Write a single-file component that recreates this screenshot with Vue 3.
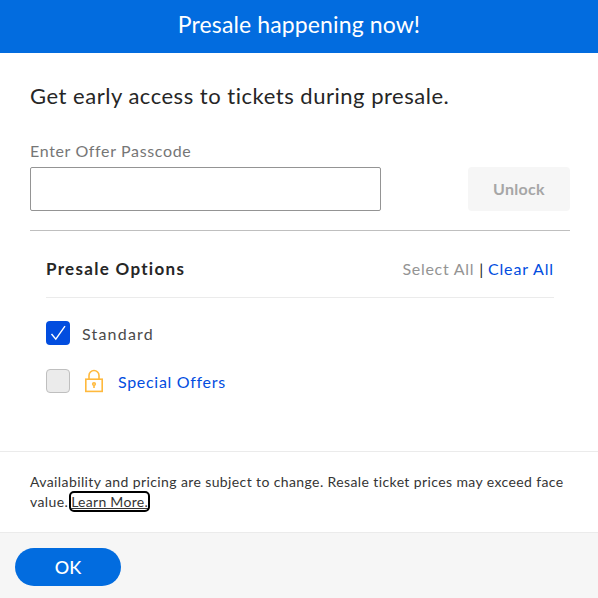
<script setup>
const offers = 'Special Offers'
</script>

<template>
  <div class="modal">
    <header class="banner">Presale happening now!</header>
    <main class="body">
      <h1 class="title">Get early access to tickets during presale.</h1>
      <label class="label" for="code">Enter Offer Passcode</label>
      <div class="code-row">
        <input id="code" class="input" type="text" />
        <button class="unlock" type="button">Unlock</button>
      </div>
      <section class="options">
        <div class="options-head">
          <h2 class="options-title">Presale Options</h2>
          <div class="actions">
            <span class="muted">Select All</span>
            <span class="sep">|</span>
            <span class="link clear">Clear All</span>
          </div>
        </div>
        <div class="option">
          <span class="box checked">
            <svg width="24" height="24" viewBox="0 0 24 24" fill="none">
              <path d="M5.5 13 L9.8 18.2 L19 5.2" stroke="#fff" stroke-width="1.4" />
            </svg>
          </span>
          <span class="option-text">Standard</span>
        </div>
        <div class="option">
          <span class="box"></span>
          <svg class="lock" width="20" height="24" viewBox="0 0 20 24" fill="none" stroke="#ffb93d" stroke-width="1.6">
            <path d="M5 10.5 V6.5 a5 5 0 0 1 10 0 V10.5" />
            <rect x="1.8" y="10.2" width="16.4" height="12.2" />
            <circle cx="10" cy="15" r="1.3" />
            <path d="M10 16.3 V19" />
          </svg>
          <span class="link">{{ offers }}</span>
        </div>
      </section>
    </main>
    <div class="notice">
      Availability and pricing are subject to change. Resale ticket prices may exceed face value.
      <a class="more" href="#">Learn More.</a>
    </div>
    <footer class="footer">
      <button class="ok" type="button">OK</button>
    </footer>
  </div>
</template>

<style scoped>
.modal {
  width: 598px;
  height: 598px;
  display: flex;
  flex-direction: column;
  background: #fff;
  font-family: Lato, "Open Sans", sans-serif;
  color: #262626;
  overflow: hidden;
}
.banner {
  height: 53px;
  flex: none;
  box-sizing: border-box;
  padding-bottom: 5px;
  background: #026cdf;
  color: #fff;
  display: flex;
  align-items: center;
  justify-content: center;
  font-size: 23px;
  letter-spacing: 0.12px;
}
.body {
  flex: 1;
  padding: 28px 28px 0 30px;
}
.title {
  margin: 0;
  font-size: 22px;
  line-height: 30px;
  font-weight: 400;
  letter-spacing: 0.52px;
}
.label {
  display: block;
  margin-top: 29px;
  font-size: 16px;
  line-height: 22px;
  color: #767676;
  letter-spacing: 0.65px;
}
.code-row {
  margin-top: 5px;
  display: flex;
  justify-content: space-between;
  padding-bottom: 19px;
  border-bottom: 1px solid #bfbfbf;
}
.input {
  width: 351px;
  height: 44px;
  box-sizing: border-box;
  border: 1px solid #949494;
  border-radius: 2px;
  background: #fff;
  outline: none;
}
.unlock {
  width: 102px;
  height: 44px;
  padding: 0 0 2px;
  border: none;
  border-radius: 4px;
  background: #f6f6f6;
  color: #a6a6a6;
  font: 700 16px Lato, sans-serif;
  letter-spacing: 0.3px;
}
.options {
  padding: 0 16px;
}
.options-head {
  height: 67px;
  box-sizing: border-box;
  border-bottom: 1px solid #ebebeb;
  display: flex;
  align-items: center;
  justify-content: space-between;
  padding-top: 9px;
  margin-bottom: -1px;
}
.options-title {
  margin: 0;
  font-size: 17px;
  font-weight: 700;
  letter-spacing: 1.3px;
}
.actions {
  display: flex;
  gap: 4px;
  font-size: 16px;
  letter-spacing: 0.72px;
}
.muted {
  color: #949494;
  margin-right: 1px;
}
.sep {
  color: #262626;
}
.link {
  color: #024ddf;
  font-size: 16px;
  letter-spacing: 0.7px;
}
.clear {
  letter-spacing: 0.87px;
}
.option {
  height: 24px;
  margin-top: 24px;
  display: flex;
  align-items: center;
}
.box {
  width: 24px;
  height: 24px;
  box-sizing: border-box;
  border: 1px solid #bfbfbf;
  border-radius: 4px;
  background: #ebebeb;
  flex: none;
  margin-right: 12px;
}
.checked {
  border: none;
  background: #024ddf;
}
.checked svg {
  display: block;
}
.lock {
  flex: none;
  margin: 0 14px 0 2px;
}
.option-text {
  font-size: 16px;
  color: #4a4a4a;
  letter-spacing: 1.2px;
}
.notice {
  height: 81px;
  flex: none;
  box-sizing: border-box;
  border-top: 1px solid #ebebeb;
  padding: 20px 30px 0;
  font-size: 14px;
  line-height: 20px;
  color: #353535;
  letter-spacing: 0.39px;
}
.more {
  margin-left: -1px;
  letter-spacing: 0.28px;
  color: #353535;
  text-decoration: underline;
  outline: 2px solid #000;
  outline-offset: 0;
  border-radius: 3px;
}
.footer {
  height: 66px;
  flex: none;
  box-sizing: border-box;
  border-top: 1px solid #ebebeb;
  background: #f6f6f6;
  padding: 15px;
}
.ok {
  display: block;
  width: 106px;
  height: 38px;
  border: none;
  border-radius: 19px;
  background: #026cdf;
  color: #fff;
  font: 500 18px Lato, sans-serif;
}
</style>
